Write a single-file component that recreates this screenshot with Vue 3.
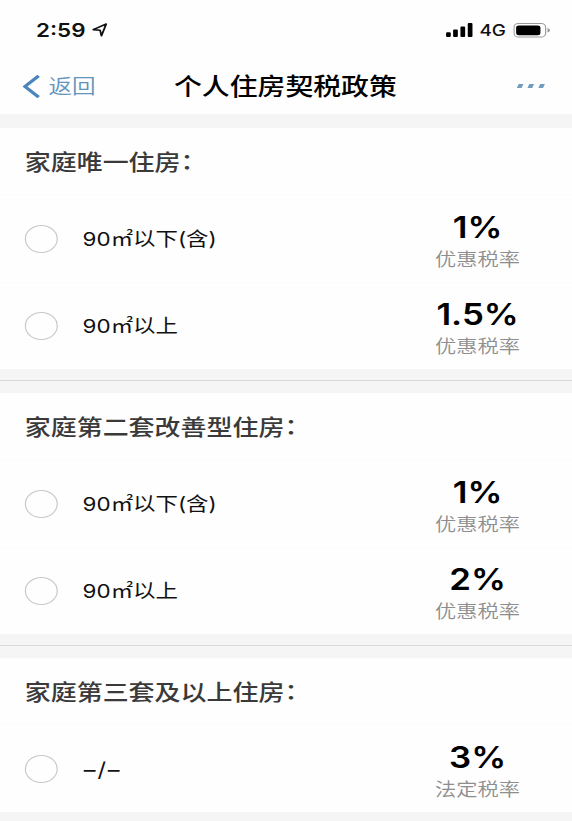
<script setup>
const sections = [
  {
    title: '家庭唯一住房',
    items: [
      { label: '90㎡以下(含)', rate: '1%', note: '优惠税率' },
      { label: '90㎡以上', rate: '1.5%', note: '优惠税率' }
    ]
  },
  {
    title: '家庭第二套改善型住房',
    items: [
      { label: '90㎡以下(含)', rate: '1%', note: '优惠税率' },
      { label: '90㎡以上', rate: '2%', note: '优惠税率' }
    ]
  },
  {
    title: '家庭第三套及以上住房',
    items: [
      { label: '–/–', rate: '3%', note: '法定税率', spaced: true }
    ]
  }
]
</script>

<template>
  <div class="screen">
    <header class="header">
      <div class="status-bar">
        <span class="time">2:59</span>
        <svg class="location" viewBox="0 0 13 14">
          <path d="M1 6.6 L12 1 L8 12.8 L6.8 7.2 Z" />
        </svg>
        <svg class="signal" viewBox="0 0 23 14">
          <rect x="0" y="9.2" width="4" height="4.8" rx="1" />
          <rect x="6" y="6.4" width="4" height="7.6" rx="1" />
          <rect x="12.2" y="3.4" width="4" height="10.6" rx="1" />
          <rect x="18.4" y="0" width="4" height="14" rx="1" />
        </svg>
        <span class="network">4G</span>
        <svg class="battery" viewBox="0 0 32 15">
          <rect class="shell" x="0.6" y="0.6" width="26.8" height="13.4" rx="3.6" />
          <rect x="2.4" y="2.4" width="20.6" height="9.8" rx="2.2" />
          <path class="cap" d="M29 5 Q31 5.6 31 7.3 Q31 9 29 9.6 Z" />
        </svg>
      </div>
      <nav class="nav">
        <div class="back">
          <svg class="chevron" viewBox="0 0 15 23">
            <path d="M13.8 0.8 L2.2 11.5 L13.8 22.2" />
          </svg>
          <span>返回</span>
        </div>
        <h1 class="title">个人住房契税政策</h1>
        <svg class="more" viewBox="0 0 24 4">
          <path d="M1.6 0 H5.6 L4 4 H0 Z M10.6 0 H14.6 L13 4 H9 Z M19.8 0 H23.8 L22.2 4 H18.2 Z" />
        </svg>
      </nav>
    </header>

    <section v-for="section in sections" :key="section.title" class="section">
      <h2 class="section-title">{{ section.title }}<span class="colon">：</span></h2>
      <div v-for="item in section.items" :key="item.label" class="row">
        <span class="radio"></span>
        <span class="label" :class="{ spaced: item.spaced }">{{ item.label }}</span>
        <div class="rate">
          <strong>{{ item.rate }}</strong>
          <small>{{ item.note }}</small>
        </div>
      </div>
    </section>
  </div>
</template>

<style>
body {
  background: #f5f5f5;
  overflow: hidden;
}
</style>

<style scoped>
/* 整屏横向拉伸 */
.screen {
  --stretch: 1.18;
  width: calc(100% / var(--stretch));
  height: 821px;
  overflow: hidden;
  transform: scaleX(var(--stretch));
  transform-origin: 0 0;
  background: #f5f5f5;
  color: #111;
  font-family: Inter, 'Noto Sans CJK SC', sans-serif;
}

.header {
  height: 114px;
  background: #fefefe;
  margin-bottom: 14px;
}

.status-bar {
  display: flex;
  align-items: center;
  height: 60px;
  padding: 0 18px 0 30.5px;
  box-sizing: border-box;
}

.time {
  font-size: 19px;
  font-weight: 600;
  width: 42px;
}

.location {
  width: 13px;
  height: 14px;
  margin-left: 5px;
  fill: none;
  stroke: #111;
  stroke-width: 1.6;
  stroke-linejoin: round;
}

.signal {
  width: 23px;
  height: 14px;
  margin-left: auto;
}

.network {
  margin: 0 6px 0 5px;
  font-size: 16px;
  font-weight: 500;
}

.battery {
  width: 32px;
  height: 15px;
}

.battery .shell {
  fill: none;
  stroke: #999;
  stroke-width: 1;
}

.battery .cap {
  fill: #999;
}

.nav {
  display: grid;
  grid-template-columns: 1fr auto 1fr;
  align-items: center;
  height: 52px;
  padding: 0 22.5px 0 19px;
}

.back {
  display: flex;
  align-items: center;
  gap: 7px;
  color: #6394bb;
  font-size: 20px;
  line-height: 30px;
  font-weight: 350;
}

.back span {
  padding-top: 2px;
}

.chevron {
  width: 15px;
  height: 23px;
  fill: none;
  stroke: #4a86bd;
  stroke-width: 3;
}

.title {
  margin: 0;
  padding: 1px 0 0 2.5px;
  font-size: 23.6px;
  font-weight: 500;
  line-height: 34px;
  color: #000;
}

.more {
  width: 24px;
  height: 4px;
  justify-self: end;
  fill: #6f9cc0;
}

.section {
  background: #fefefe;
}

.section + .section {
  border-top: 1px solid #d9d9d9;
  margin-top: 11px;
}

.section + .section::before {
  content: '';
  display: block;
  height: 12px;
  background: #f5f5f5;
}

.section-title {
  margin: 0;
  height: 66px;
  padding-left: 21px;
  font-size: 22px;
  font-weight: 500;
  line-height: 68px;
  color: #3a3a3a;
}

.colon {
  position: relative;
  top: -1px;
}

.row {
  display: flex;
  align-items: center;
  height: 87.5px;
  padding: 1px 0 0 21px;
  box-sizing: border-box;
  border-top: 1px solid #fbfbfb;
}

.radio {
  width: 28px;
  height: 28px;
  box-sizing: border-box;
  border: 1px solid #c8c8c8;
  border-radius: 50%;
}

.label {
  flex: 1;
  margin-left: 21px;
  padding-top: 2px;
  font-size: 19px;
  line-height: 28px;
}

.label.spaced {
  padding-left: 1px;
  font-size: 20px;
  letter-spacing: 1.6px;
}

.rate {
  width: 160px;
  display: flex;
  flex-direction: column;
  align-items: center;
  padding-top: 7px;
}

.rate strong {
  font-size: 29.5px;
  font-weight: 600;
  line-height: 34px;
  color: #000;
}

.rate small {
  font-size: 18px;
  font-weight: 350;
  line-height: 31px;
  color: #8e8e8e;
}
</style>
